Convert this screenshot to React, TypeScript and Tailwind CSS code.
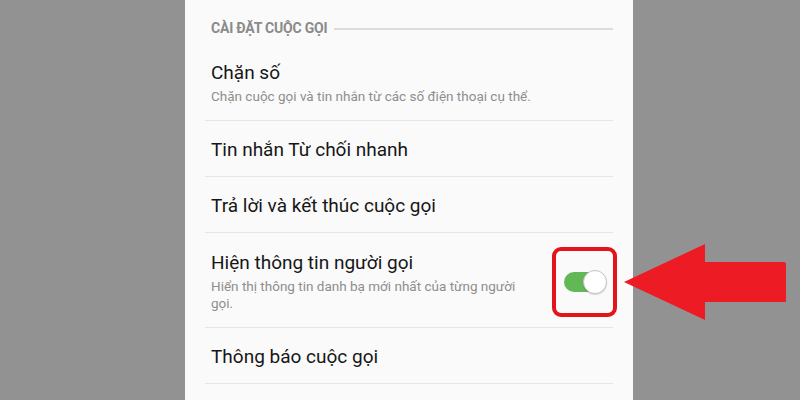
import React from "react";

type Row = { title: string; sub?: string; toggle?: boolean };

const rows: Row[] = [
  { title: "Chặn số", sub: "Chặn cuộc gọi và tin nhắn từ các số điện thoại cụ thể." },
  { title: "Tin nhắn Từ chối nhanh" },
  { title: "Trả lời và kết thúc cuộc gọi" },
  { title: "Hiện thông tin người gọi", sub: "Hiển thị thông tin danh bạ mới nhất của từng người gọi.", toggle: true },
  { title: "Thông báo cuộc gọi" },
];

const Toggle = () => (
  <div className="relative w-[65px] h-[70px] flex items-center justify-center shrink-0">
    <div className="relative w-[44px] h-[24px]">
      <div className="absolute left-[1px] top-[2px] w-[40px] h-[20px] rounded-full bg-[#62b857]" />
      <div className="absolute right-0 top-0 w-[24px] h-[24px] rounded-full bg-white border border-[#c4c4c4] shadow-[0_1px_1px_rgba(0,0,0,0.15)]" />
    </div>
    <div className="absolute inset-0 rounded-[9px] border-[4px] border-[#e3141b]" />
  </div>
);

const App = () => {
  return (
    <div
      className="relative w-[800px] h-[400px] overflow-hidden bg-[#929292] flex"
      style={{ fontFamily: "Roboto, 'Noto Sans', sans-serif" }}
    >
      <div className="ml-[185px] w-[448px] h-full bg-[#fafafa] pl-[20px] pr-[20px]">
        <div className="flex items-center pt-[20px] pl-[6px] h-[37px]">
          <span className="text-[14px] font-bold text-[#8a8a8a] tracking-[-0.2px] whitespace-nowrap">
            CÀI ĐẶT CUỘC GỌI
          </span>
          <div className="flex-1 h-[2px] bg-[#dcdcdc] ml-[7px]" />
        </div>
        {rows.map((r, i) => (
          <div
            key={i}
            className={`flex items-center border-b border-[#e6e6e6] pl-[6px] ${
              r.toggle ? "h-[95px]" : r.sub ? "h-[84px]" : "h-[56px]"
            }`}
          >
            <div className={`flex-1 ${r.toggle ? "pr-[14px] pt-[2px]" : r.sub ? "pt-[8px]" : "pt-[2px]"}`}>
              <div className="text-[19px] text-[#161616] leading-[24px]">{r.title}</div>
              {r.sub && (
                <div className="text-[13.5px] text-[#8e8e8e] leading-[17px] mt-[3px]">{r.sub}</div>
              )}
            </div>
            {r.toggle && (
              <div className="mr-[-4px] mt-[4px]">
                <Toggle />
              </div>
            )}
          </div>
        ))}
      </div>
      <svg className="absolute left-[622px] top-[243px]" width="166" height="78" viewBox="0 0 166 78">
        <path d="M2 39 L83 1 L83 19 L162 19 Q164 19 164 21 L164 59 L83 59 L83 77 Z" fill="#ed1c24" />
      </svg>
    </div>
  );
};

export default App;
